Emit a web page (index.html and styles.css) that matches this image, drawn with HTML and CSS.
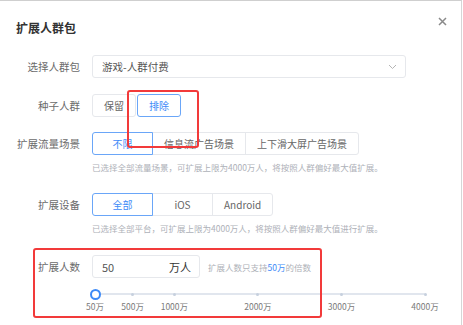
FILE: index.html
```html
<!DOCTYPE html>
<html lang="zh-CN">
<head>
  <meta charset="UTF-8">
  <title>扩展人群包</title>
  <link rel="stylesheet" href="styles.css">
</head>
<body>

  <div class="dialog">
    <div class="dialog-header">
      <span class="title">扩展人群包</span>
      <span class="close">
        <svg width="9" height="9" viewBox="0 0 9 9"><path d="M1 1L8 8M8 1L1 8" stroke="#8a8a8a" stroke-width="1.5" fill="none"/></svg>
      </span>
    </div>

    <div class="form">
      <div class="form-row">
        <label class="form-label">选择人群包</label>
        <div class="select">
          <span>游戏-人群付费</span>
          <svg width="9" height="6" viewBox="0 0 9 6"><path d="M1 1L4.5 4.5L8 1" stroke="#b5b5b5" stroke-width="1" fill="none"/></svg>
        </div>
      </div>

      <div class="form-row">
        <label class="form-label">种子人群</label>
        <div class="btn-list">
          <span class="btn">保留</span>
          <span class="btn active">排除</span>
        </div>
      </div>

      <div class="form-row">
        <label class="form-label">扩展流量场景</label>
        <div class="seg">
          <span class="seg-item active">不限</span>
          <span class="seg-item">信息流广告场景</span>
          <span class="seg-item">上下滑大屏广告场景</span>
        </div>
      </div>
      <div class="hint">已选择全部流量场景，可扩展上限为4000万人，将按照人群偏好最大值扩展。</div>

      <div class="form-row row-device">
        <label class="form-label">扩展设备</label>
        <div class="seg">
          <span class="seg-item active">全部</span>
          <span class="seg-item">iOS</span>
          <span class="seg-item">Android</span>
        </div>
      </div>
      <div class="hint">已选择全部平台，可扩展上限为4000万人，将按照人群偏好最大值进行扩展。</div>

      <div class="form-row row-count">
        <label class="form-label">扩展人数</label>
        <div class="num-input">
          <span class="num">50</span>
          <span class="unit">万人</span>
        </div>
        <span class="tip">扩展人数只支持<em>50万</em>的倍数</span>
      </div>

      <div class="slider" id="slider">
        <div class="track"></div>
      </div>
    </div>

    <div class="mark mark-seed"></div>
    <div class="mark mark-count"></div>
  </div>

  <script>
    // 刻度: 50万 ~ 4000万
    const slider = document.getElementById("slider");
    const marks = [50, 500, 1000, 2000, 3000, 4000];
    const min = 50, max = 4000;

    marks.forEach(v => {
      const pos = (v - min) / (max - min) * 100;
      const dot = document.createElement("span");
      dot.className = "dot";
      dot.style.left = pos + "%";
      slider.appendChild(dot);

      const label = document.createElement("span");
      label.className = "mark-label";
      label.style.left = pos + "%";
      label.textContent = v + "万";
      slider.appendChild(label);
    });

    const handle = document.createElement("span");
    handle.className = "handle";
    handle.style.left = "0%";
    slider.appendChild(handle);
  </script>

</body>
</html>
```

FILE: styles.css
```css
body {
  margin: 0;
  font-family: "Noto Sans CJK SC", "Noto Sans", sans-serif;
  color: #666;
  background: #fff;
}
.dialog {
  position: relative;
  width: 461px;
  height: 324px;
  border-top: 1px solid #cfcfcf;
  border-right: 1px solid #d6d6d6;
  background: #fff;
  overflow: hidden;
}
.dialog-header {
  display: flex;
  justify-content: space-between;
  align-items: center;
  padding: 18px 14px 0 16px;
  height: 17px;
}
.title {
  font-size: 12px;
  font-weight: bold;
  color: #333;
  line-height: 16px;
}
.close {
  display: flex;
  margin-top: -12px;
}
.form {
  padding-top: 19px;
}
.form-row {
  display: flex;
  align-items: center;
  height: 23px;
  margin-bottom: 16px;
}
.form-label {
  flex: none;
  width: 92px;
  padding-right: 12px;
  box-sizing: border-box;
  text-align: right;
  font-size: 10.5px;
  color: #6b6b6b;
  white-space: nowrap;
}
.form-row:nth-child(2) {
  margin-bottom: 15px;
}
.form-row:nth-child(3) {
  margin-bottom: 0;
}
.select {
  display: flex;
  justify-content: space-between;
  align-items: center;
  width: 314px;
  height: 23px;
  box-sizing: border-box;
  padding: 0 8px 0 9px;
  border: 1px solid #e6e8ec;
  border-radius: 3px;
  font-size: 10.5px;
  color: #555;
}
.btn-list {
  display: flex;
  gap: 1px;
}
.btn {
  height: 23px;
  line-height: 21px;
  box-sizing: border-box;
  padding: 0 11px;
  border: 1px solid #e6e8ec;
  border-radius: 3px;
  font-size: 10px;
  color: #666;
}
.btn.active {
  border-color: #6aa6f8;
  color: #3d8af7;
}
.seg {
  display: flex;
}
.seg-item {
  flex: none;
  min-width: 61px;
  height: 23px;
  line-height: 21px;
  box-sizing: border-box;
  padding: 0 11px;
  text-align: center;
  border: 1px solid #e6e8ec;
  margin-left: -1px;
  font-size: 10px;
  color: #666;
}
.seg-item:first-child {
  margin-left: 0;
  border-radius: 3px 0 0 3px;
}
.seg-item:last-child {
  border-radius: 0 3px 3px 0;
}
.seg-item.active {
  position: relative;
  border-color: #6aa6f8;
  color: #3d8af7;
}
.hint {
  margin: 6px 0 0 92px;
  font-size: 8.5px;
  line-height: 12px;
  color: #aeb1b8;
  white-space: nowrap;
}
.row-device {
  margin-top: 20px;
  margin-bottom: 0;
}
.row-count {
  margin-top: 21px;
  margin-bottom: 0;
}
.num-input {
  display: flex;
  justify-content: space-between;
  align-items: center;
  width: 108px;
  height: 23px;
  box-sizing: border-box;
  padding: 0 8px 0 9px;
  border: 1px solid #e6e8ec;
  border-radius: 3px;
}
.num {
  font-size: 11px;
  color: #555;
}
.unit {
  font-size: 11px;
  color: #333;
}
.tip {
  margin-left: 8px;
  font-size: 8.5px;
  color: #aeb1b8;
}
.tip em {
  font-style: normal;
  color: #3d8af7;
}
.slider {
  position: relative;
  margin: 15px 0 0 95px;
  width: 330px;
  height: 24px;
}
.track {
  height: 2px;
  margin-top: 1px;
  background: #e1e6ee;
  border-radius: 1px;
}
.dot {
  position: absolute;
  top: 0;
  width: 3px;
  height: 3px;
  margin-left: -1.5px;
  border-radius: 50%;
  background: #c6d0de;
}
.handle {
  position: absolute;
  top: -4px;
  width: 11px;
  height: 11px;
  margin-left: -5.5px;
  box-sizing: border-box;
  border: 2px solid #3d8af7;
  border-radius: 50%;
  background: #fff;
}
.mark-label {
  position: absolute;
  top: 7px;
  transform: translateX(-50%);
  font-size: 8.5px;
  line-height: 12px;
  color: #7a7a7a;
  white-space: nowrap;
}
.mark {
  position: absolute;
  box-sizing: border-box;
  border: 2px solid #f23a3a;
  border-radius: 3px;
}
.mark-seed {
  left: 127px;
  top: 89px;
  width: 72px;
  height: 58px;
}
.mark-count {
  left: 33px;
  top: 247px;
  width: 289px;
  height: 70px;
}
```
